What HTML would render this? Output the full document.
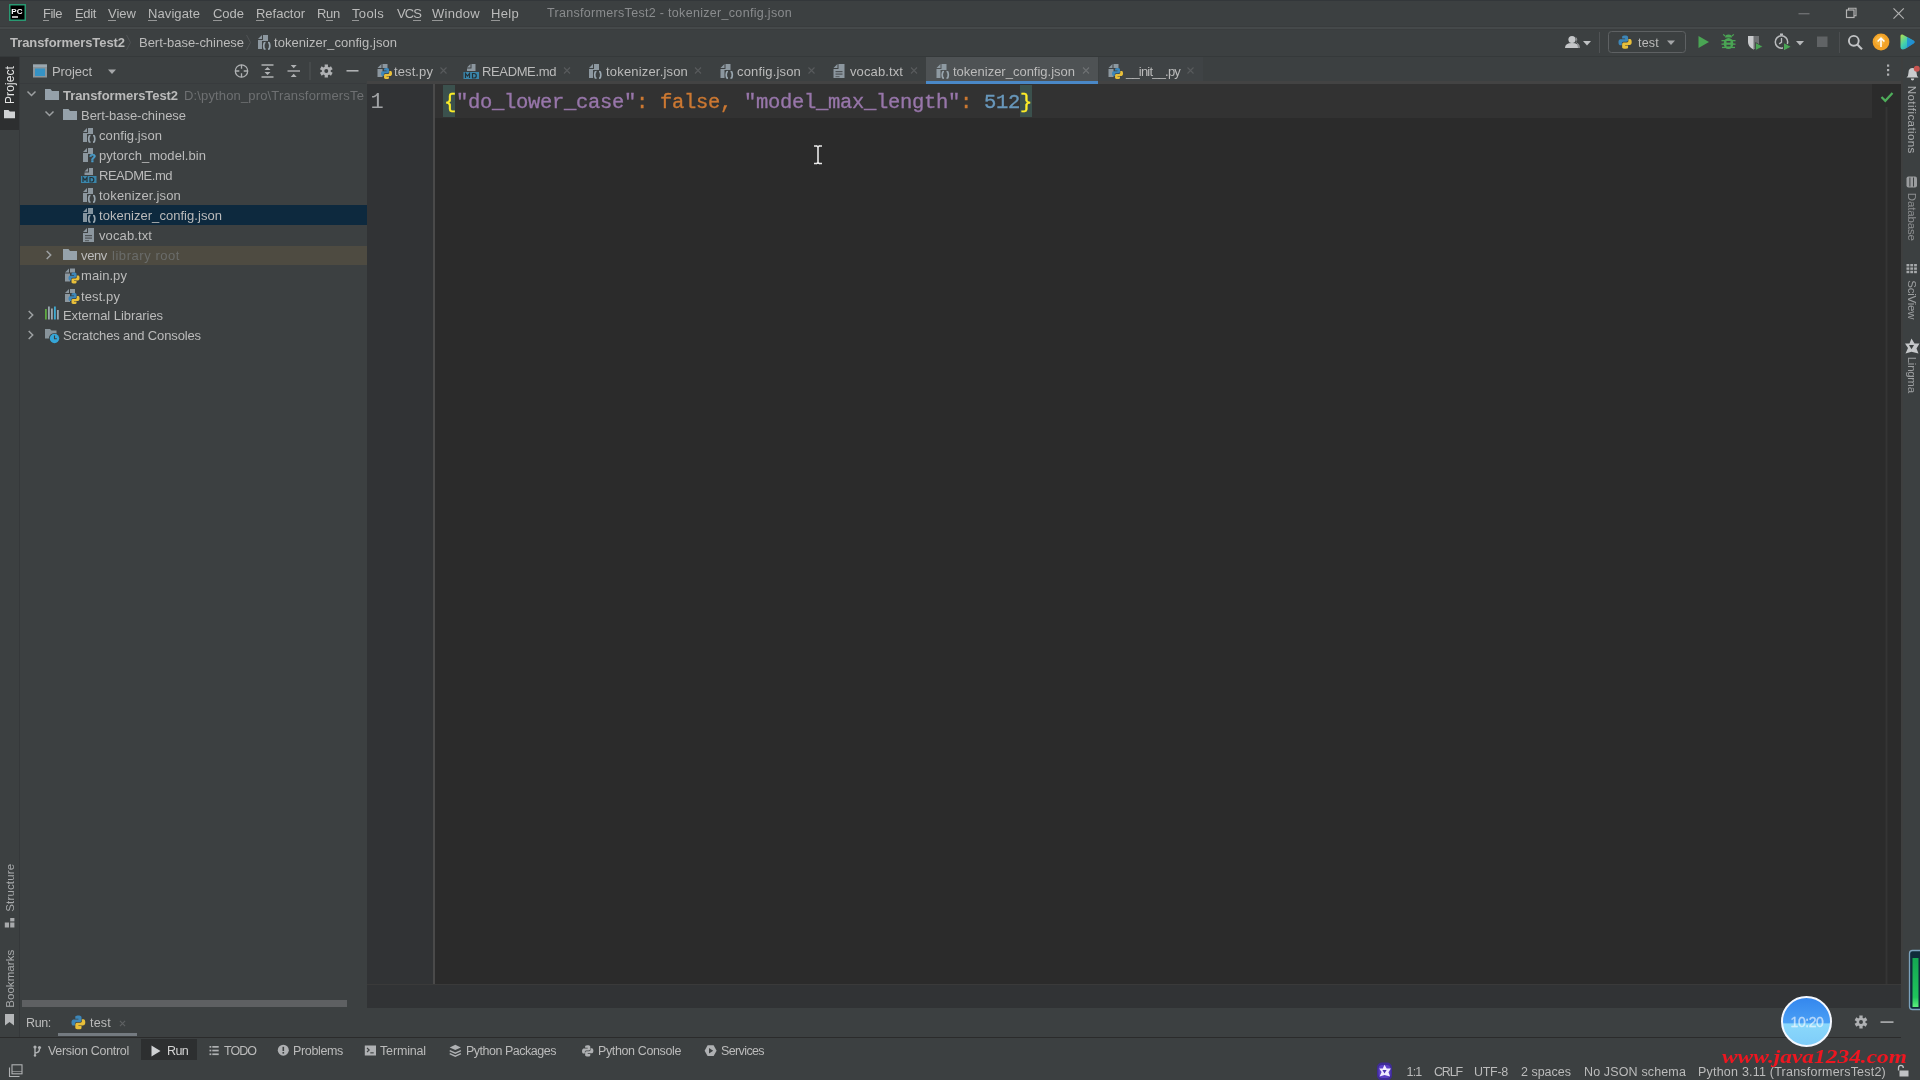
<!DOCTYPE html>
<html><head><meta charset="utf-8"><title>TransformersTest2 - tokenizer_config.json</title>
<style>
html,body{margin:0;padding:0;background:#3c4041;overflow:hidden;}
body{width:1920px;height:1080px;position:relative;overflow:hidden;font-family:"Liberation Sans", sans-serif;}
.b{position:absolute;}
.t{position:absolute;white-space:pre;line-height:1;}
.m{font-family:"Liberation Mono", monospace;}
svg{position:absolute;overflow:visible;}
body{filter:blur(.6px);}
</style></head>
<body>
<div class="b" style="left:0px;top:0px;width:1920px;height:27px;background:#3c4041;"></div>
<div class="b" style="left:0px;top:0px;width:1920px;height:1px;background:#33373a;"></div>
<div class="b" style="left:0px;top:26px;width:1920px;height:1px;background:#393c3d;"></div>
<div class="b" style="left:0px;top:27px;width:1920px;height:2px;background:#45494a;"></div>
<div class="b" style="left:0px;top:29px;width:1920px;height:1px;background:#3a3d3e;"></div>
<div class="b" style="left:0px;top:30px;width:1920px;height:26px;background:#3c4041;"></div>
<div class="b" style="left:0px;top:56px;width:1920px;height:1px;background:#35393a;"></div>
<div class="b" style="left:0px;top:57px;width:20px;height:981px;background:#3c4041;"></div>
<div class="b" style="left:0px;top:57px;width:19px;height:73px;background:#2d2f30;"></div>
<div class="b" style="left:19px;top:57px;width:1px;height:981px;background:#35383a;"></div>
<div class="b" style="left:20px;top:57px;width:347px;height:951px;background:#3c4041;"></div>
<div class="b" style="left:20px;top:83px;width:347px;height:1px;background:#383b3d;"></div>
<div class="b" style="left:20px;top:205px;width:347px;height:20px;background:#0d293e;"></div>
<div class="b" style="left:20px;top:246px;width:347px;height:19px;background:#4e4b41;"></div>
<div class="b" style="left:22px;top:1000px;width:325px;height:7px;background:#5e6062;"></div>
<div class="b" style="left:366px;top:57px;width:1535px;height:27px;background:#3c4041;"></div>
<div class="b" style="left:367px;top:81px;width:1534px;height:3px;background:#434343;"></div>
<div class="b" style="left:926px;top:57px;width:172px;height:24px;background:#4e5254;"></div>
<div class="b" style="left:926px;top:81px;width:172px;height:3px;background:#4a88c7;"></div>
<div class="b" style="left:1099px;top:57px;width:104px;height:24px;background:#3f4345;"></div>
<div class="b" style="left:367px;top:84px;width:1534px;height:900px;background:#2b2b2b;"></div>
<div class="b" style="left:367px;top:84px;width:67px;height:900px;background:#313335;"></div>
<div class="b" style="left:433px;top:84px;width:2px;height:900px;background:#4a4a4a;"></div>
<div class="b" style="left:435px;top:84px;width:1437px;height:34px;background:#323232;"></div>
<div class="b" style="left:443px;top:85px;width:12px;height:32px;background:#3b514d;"></div>
<div class="b" style="left:1020px;top:85px;width:12px;height:32px;background:#3b514d;"></div>
<div class="b" style="left:1885px;top:107px;width:3px;height:877px;background:#2f2f2f;"></div>
<div class="b" style="left:1886px;top:107px;width:1px;height:877px;background:#353535;"></div>
<div class="b" style="left:367px;top:984px;width:1534px;height:1px;background:#3a3a3a;"></div>
<div class="b" style="left:367px;top:985px;width:1534px;height:23px;background:#313335;"></div>
<div class="b" style="left:1901px;top:57px;width:19px;height:951px;background:#3c4041;"></div>
<div class="b" style="left:1901px;top:57px;width:2px;height:951px;background:#3e3f3f;"></div>
<div class="b" style="left:20px;top:1008px;width:1881px;height:29px;background:#3c4041;"></div>
<div class="b" style="left:58px;top:1033px;width:79px;height:3px;background:#747a80;"></div>
<div class="b" style="left:0px;top:1037px;width:1901px;height:1px;background:#2b2b2b;"></div>
<div class="b" style="left:0px;top:1038px;width:1920px;height:24px;background:#3c4041;"></div>
<div class="b" style="left:141px;top:1039px;width:56px;height:21px;background:#2d2f30;"></div>
<div class="b" style="left:1781px;top:996px;width:51px;height:51px;background:linear-gradient(180deg,#3487ee 0%,#4a9ff5 53%,#8ad8fb 55%,#7fcdf9 100%);border-radius:50%;box-sizing:border-box;border:2.5px solid #f4f8ff;"></div>
<div class="b" style="left:0px;top:1062px;width:1920px;height:18px;background:#3c4041;"></div>
<span class="t" style="left:43px;top:7.0px;font-size:13px;color:#bbbbbb;letter-spacing:-0.488px;">File</span>
<span class="t" style="left:75px;top:7.0px;font-size:13px;color:#bbbbbb;letter-spacing:-0.352px;">Edit</span>
<span class="t" style="left:108px;top:7.0px;font-size:13px;color:#bbbbbb;letter-spacing:0.012px;">View</span>
<span class="t" style="left:148px;top:7.0px;font-size:13px;color:#bbbbbb;letter-spacing:0.086px;">Navigate</span>
<span class="t" style="left:213px;top:7.0px;font-size:13px;color:#bbbbbb;letter-spacing:-0.020px;">Code</span>
<span class="t" style="left:256px;top:7.0px;font-size:13px;color:#bbbbbb;letter-spacing:-0.018px;">Refactor</span>
<span class="t" style="left:317px;top:7.0px;font-size:13px;color:#bbbbbb;letter-spacing:-0.286px;">Run</span>
<span class="t" style="left:352px;top:7.0px;font-size:13px;color:#bbbbbb;letter-spacing:0.328px;">Tools</span>
<span class="t" style="left:397px;top:7.0px;font-size:13px;color:#bbbbbb;letter-spacing:-0.911px;">VCS</span>
<span class="t" style="left:432px;top:7.0px;font-size:13px;color:#bbbbbb;letter-spacing:0.292px;">Window</span>
<span class="t" style="left:491px;top:7.0px;font-size:13px;color:#bbbbbb;letter-spacing:0.312px;">Help</span>
<span class="t" style="left:547px;top:6.8px;font-size:12.5px;color:#8a8c8e;letter-spacing:0.310px;">TransformersTest2 - tokenizer_config.json</span>
<span class="t" style="left:10px;top:35.5px;font-size:13px;color:#bbbbbb;font-weight:700;letter-spacing:-0.064px;">TransformersTest2</span>
<span class="t" style="left:139px;top:35.5px;font-size:13px;color:#bbbbbb;letter-spacing:-0.029px;">Bert-base-chinese</span>
<span class="t" style="left:274px;top:35.5px;font-size:13px;color:#bbbbbb;letter-spacing:0.041px;">tokenizer_config.json</span>
<span class="t" style="left:52px;top:64.5px;font-size:13px;color:#bbbbbb;letter-spacing:-0.067px;">Project</span>
<span class="t" style="left:63px;top:88.5px;font-size:13px;color:#bbbbbb;font-weight:700;letter-spacing:-0.064px;">TransformersTest2</span>
<span class="t" style="left:184px;top:88.5px;font-size:13px;color:#6e7072;letter-spacing:0.150px;">D:\python_pro\TransformersTe</span>
<span class="t" style="left:81px;top:108.5px;font-size:13px;color:#bbbbbb;letter-spacing:-0.029px;">Bert-base-chinese</span>
<span class="t" style="left:99px;top:128.5px;font-size:13px;color:#bbbbbb;letter-spacing:0.077px;">config.json</span>
<span class="t" style="left:99px;top:148.5px;font-size:13px;color:#bbbbbb;letter-spacing:0.045px;">pytorch_model.bin</span>
<span class="t" style="left:99px;top:168.5px;font-size:13px;color:#bbbbbb;letter-spacing:-0.477px;">README.md</span>
<span class="t" style="left:99px;top:188.5px;font-size:13px;color:#bbbbbb;letter-spacing:0.179px;">tokenizer.json</span>
<span class="t" style="left:99px;top:208.5px;font-size:13px;color:#bbbbbb;letter-spacing:0.041px;">tokenizer_config.json</span>
<span class="t" style="left:99px;top:228.5px;font-size:13px;color:#bbbbbb;letter-spacing:0.108px;">vocab.txt</span>
<span class="t" style="left:81px;top:248.5px;font-size:13px;color:#bbbbbb;letter-spacing:-0.367px;">venv</span>
<span class="t" style="left:112px;top:248.5px;font-size:13px;color:#6a6c6a;letter-spacing:0.548px;">library root</span>
<span class="t" style="left:81px;top:268.5px;font-size:13px;color:#bbbbbb;letter-spacing:0.067px;">main.py</span>
<span class="t" style="left:81px;top:289.5px;font-size:13px;color:#bbbbbb;letter-spacing:0.100px;">test.py</span>
<span class="t" style="left:63px;top:308.5px;font-size:13px;color:#bbbbbb;letter-spacing:-0.064px;">External Libraries</span>
<span class="t" style="left:63px;top:328.5px;font-size:13px;color:#bbbbbb;letter-spacing:-0.133px;">Scratches and Consoles</span>
<span class="t" style="left:394px;top:64.5px;font-size:13px;color:#bbbbbb;letter-spacing:0.100px;">test.py</span>
<span class="t" style="left:482px;top:64.5px;font-size:13px;color:#bbbbbb;letter-spacing:-0.366px;">README.md</span>
<span class="t" style="left:606px;top:64.5px;font-size:13px;color:#bbbbbb;letter-spacing:0.179px;">tokenizer.json</span>
<span class="t" style="left:737px;top:64.5px;font-size:13px;color:#bbbbbb;letter-spacing:0.168px;">config.json</span>
<span class="t" style="left:850px;top:64.5px;font-size:13px;color:#bbbbbb;letter-spacing:0.108px;">vocab.txt</span>
<span class="t" style="left:953px;top:64.5px;font-size:13px;color:#bbbbbb;letter-spacing:-0.007px;">tokenizer_config.json</span>
<span class="t" style="left:1126px;top:64.5px;font-size:13px;color:#bbbbbb;letter-spacing:-0.808px;">__init__.py</span>
<span class="t m" style="left:370.5px;top:91.8px;font-size:22px;color:#a1a3a5;">1</span>
<span class="t m" style="left:444px;top:93.0px;font-size:20.5px;color:#ffef28;-webkit-text-stroke:.35px;letter-spacing:-.302px;">{</span>
<span class="t m" style="left:456px;top:93.0px;font-size:20.5px;color:#9876aa;-webkit-text-stroke:.35px;letter-spacing:-.302px;">"</span>
<span class="t m" style="left:468px;top:93.0px;font-size:20.5px;color:#9876aa;-webkit-text-stroke:.35px;letter-spacing:-.302px;">do_lower_case</span>
<span class="t m" style="left:624px;top:93.0px;font-size:20.5px;color:#9876aa;-webkit-text-stroke:.35px;letter-spacing:-.302px;">"</span>
<span class="t m" style="left:636px;top:93.0px;font-size:20.5px;color:#cc7832;-webkit-text-stroke:.35px;letter-spacing:-.302px;">:</span>
<span class="t m" style="left:660px;top:93.0px;font-size:20.5px;color:#cc7832;-webkit-text-stroke:.35px;letter-spacing:-.302px;">false,</span>
<span class="t m" style="left:744px;top:93.0px;font-size:20.5px;color:#9876aa;-webkit-text-stroke:.35px;letter-spacing:-.302px;">"</span>
<span class="t m" style="left:756px;top:93.0px;font-size:20.5px;color:#9876aa;-webkit-text-stroke:.35px;letter-spacing:-.302px;">model_max_length</span>
<span class="t m" style="left:948px;top:93.0px;font-size:20.5px;color:#9876aa;-webkit-text-stroke:.35px;letter-spacing:-.302px;">"</span>
<span class="t m" style="left:960px;top:93.0px;font-size:20.5px;color:#cc7832;-webkit-text-stroke:.35px;letter-spacing:-.302px;">:</span>
<span class="t m" style="left:984px;top:93.0px;font-size:20.5px;color:#6897bb;-webkit-text-stroke:.35px;letter-spacing:-.302px;">512</span>
<span class="t m" style="left:1020px;top:93.0px;font-size:20.5px;color:#ffef28;-webkit-text-stroke:.35px;letter-spacing:-.302px;">}</span>
<span class="t" style="left:26px;top:1016.8px;font-size:12.5px;color:#bbbbbb;letter-spacing:-0.352px;">Run:</span>
<span class="t" style="left:90px;top:1016.8px;font-size:12.5px;color:#bbbbbb;letter-spacing:0.211px;">test</span>
<span class="t" style="left:48px;top:1044.8px;font-size:12.5px;color:#bbbbbb;letter-spacing:-0.298px;">Version Control</span>
<span class="t" style="left:167px;top:1044.8px;font-size:12.5px;color:#d4d4d4;letter-spacing:-0.646px;">Run</span>
<span class="t" style="left:224px;top:1044.8px;font-size:12.5px;color:#bbbbbb;letter-spacing:-0.973px;">TODO</span>
<span class="t" style="left:293px;top:1044.8px;font-size:12.5px;color:#bbbbbb;letter-spacing:-0.350px;">Problems</span>
<span class="t" style="left:380px;top:1044.8px;font-size:12.5px;color:#bbbbbb;letter-spacing:-0.156px;">Terminal</span>
<span class="t" style="left:466px;top:1044.8px;font-size:12.5px;color:#bbbbbb;letter-spacing:-0.486px;">Python Packages</span>
<span class="t" style="left:598px;top:1044.8px;font-size:12.5px;color:#bbbbbb;letter-spacing:-0.376px;">Python Console</span>
<span class="t" style="left:721px;top:1044.8px;font-size:12.5px;color:#bbbbbb;letter-spacing:-0.617px;">Services</span>
<span class="t" style="left:1406.5px;top:1065.5px;font-size:12.5px;color:#bbbbbb;letter-spacing:-0.797px;">1:1</span>
<span class="t" style="left:1434px;top:1065.5px;font-size:12.5px;color:#bbbbbb;letter-spacing:-1.164px;">CRLF</span>
<span class="t" style="left:1474px;top:1065.5px;font-size:12.5px;color:#bbbbbb;letter-spacing:-0.284px;">UTF-8</span>
<span class="t" style="left:1521px;top:1065.5px;font-size:12.5px;color:#bbbbbb;letter-spacing:-0.004px;">2 spaces</span>
<span class="t" style="left:1584px;top:1065.5px;font-size:12.5px;color:#bbbbbb;letter-spacing:0.141px;">No JSON schema</span>
<span class="t" style="left:1698px;top:1065.5px;font-size:12.5px;color:#bbbbbb;letter-spacing:0.215px;">Python 3.11 (TransformersTest2)</span>
<span class="t" style="left:1638px;top:36.8px;font-size:12.5px;color:#bbbbbb;letter-spacing:0.211px;">test</span>
<span class="t" style="left:-9.0px;top:79.0px;width:38px;font-size:12px;color:#e4e4e4;letter-spacing:0.092px;transform:rotate(-90deg);transform-origin:50% 50%;">Project</span>
<span class="t" style="left:-13.5px;top:882.2px;width:48px;font-size:11.5px;color:#a8aaac;letter-spacing:0.148px;transform:rotate(-90deg);transform-origin:50% 50%;">Structure</span>
<span class="t" style="left:-18.5px;top:973.2px;width:58px;font-size:11.5px;color:#a8aaac;letter-spacing:0.052px;transform:rotate(-90deg);transform-origin:50% 50%;">Bookmarks</span>
<span class="t" style="left:1877.0px;top:114.2px;width:68px;font-size:11.5px;color:#aaacae;letter-spacing:0.412px;transform:rotate(90deg);transform-origin:50% 50%;">Notifications</span>
<span class="t" style="left:1887.0px;top:210.8px;width:48px;font-size:11.5px;color:#8c8e90;letter-spacing:-0.154px;transform:rotate(90deg);transform-origin:50% 50%;">Database</span>
<span class="t" style="left:1891.5px;top:293.8px;width:39px;font-size:11.5px;color:#9c9ea0;letter-spacing:-0.243px;transform:rotate(90deg);transform-origin:50% 50%;">SciView</span>
<span class="t" style="left:1893.0px;top:369.2px;width:36px;font-size:11.5px;color:#9c9ea0;letter-spacing:-0.286px;transform:rotate(90deg);transform-origin:50% 50%;">Lingma</span>
<span class="t" style="left:1790.5px;top:1015.0px;font-size:14px;color:#ffffff;letter-spacing:-0.409px;opacity:.62;-webkit-text-stroke:.3px;">10:20</span>
<span class="t" style="left:1722px;top:1046.5px;font-size:19px;color:#ee1620;font-weight:700;transform:scaleX(1.2313);transform-origin:0 50%;font-family:'Liberation Serif',serif;font-style:italic;">www.java1234.com</span>
<svg width="1920" height="1080" style="left:0;top:0"><rect x="9" y="4" width="17" height="17" rx="1" fill="#21d789"/><rect x="9" y="4" width="17" height="17" rx="1" fill="#2f6f62" opacity=".6"/><rect x="10.5" y="5.5" width="14" height="14" fill="#000"/><text x="11.3" y="13.6" font-family="Liberation Sans, sans-serif" font-weight="700" font-size="8" fill="#fff">PC</text><rect x="12" y="16.3" width="6" height="1.4" fill="#fff"/>
<rect x="43" y="20" width="6" height="1" fill="#bbbbbb" opacity=".7"/>
<rect x="75" y="20" width="7" height="1" fill="#bbbbbb" opacity=".7"/>
<rect x="108" y="20" width="8" height="1" fill="#bbbbbb" opacity=".7"/>
<rect x="148" y="20" width="9" height="1" fill="#bbbbbb" opacity=".7"/>
<rect x="213" y="20" width="9" height="1" fill="#bbbbbb" opacity=".7"/>
<rect x="256" y="20" width="8" height="1" fill="#bbbbbb" opacity=".7"/>
<rect x="326" y="20" width="7" height="1" fill="#bbbbbb" opacity=".7"/>
<rect x="352" y="20" width="7" height="1" fill="#bbbbbb" opacity=".7"/>
<rect x="413" y="20" width="8" height="1" fill="#bbbbbb" opacity=".7"/>
<rect x="432" y="20" width="11" height="1" fill="#bbbbbb" opacity=".7"/>
<rect x="491" y="20" width="9" height="1" fill="#bbbbbb" opacity=".7"/>
<rect x="1798.5" y="13" width="11" height="1.4" fill="#6c6e70"/>
<rect x="1846.5" y="10" width="7.5" height="7.5" fill="none" stroke="#b4b4b4" stroke-width="1.2"/><path d="M1848.5 10 v-1.7 h7.5 v7.5 h-2" fill="none" stroke="#b4b4b4" stroke-width="1.1"/>
<path d="M1893.5 8.3 L1903.8 18.6 M1903.8 8.3 L1893.5 18.6" stroke="#b0b0b0" stroke-width="1.2" fill="none"/>
<path d="M126.5 35 L130.5 42.5 L126.5 50" fill="none" stroke="#505355" stroke-width="1"/>
<path d="M246.5 35 L250.5 42.5 L246.5 50" fill="none" stroke="#505355" stroke-width="1"/>
<path d="M262 35 L258 39 H262 Z" fill="#9aa7b0" opacity=".85"/><path d="M263 35 H268 V41 H262 V49 H258 V40 H263 Z" fill="#9aa7b0" opacity=".85"/><path d="M265.5 42.5 q-1.6 0 -1.6 1.4 v1 q0 .9 -1 .9 q1 0 1 .9 v1 q0 1.4 1.6 1.4" fill="none" stroke="#9aa7b0" stroke-width="1.7"/><path d="M268 42.5 q1.6 0 1.6 1.4 v1 q0 .9 1 .9 q-1 0 -1 .9 v1 q0 1.4 -1.6 1.4" fill="none" stroke="#9aa7b0" stroke-width="1.7"/>
<circle cx="1572" cy="39.5" r="3.6" fill="#c4c6c8"/><path d="M1565 48 q0 -5 7 -5 q7 0 7 5 z" fill="#c4c6c8"/><path d="M1575.5 37 a3 3 0 0 1 0 5.5 q4.5 .5 4.5 5.5 h-2" fill="#8f9193"/>
<path d="M1583 41 h8 l-4.0 4.5 z" fill="#c0c2c4"/>
<rect x="1599" y="32" width="1" height="21" fill="#505355"/>
<rect x="1608.5" y="31.5" width="77" height="21" rx="3" fill="none" stroke="#5e6163" stroke-width="1"/>
<g transform="translate(1618.5 35.5) scale(1.1)"><path d="M5.9 0 C3.2 0 3.3 1.2 3.3 1.2 V2.8 H6 V3.4 H2 C2 3.4 0 3.2 0 6.1 C0 9 1.7 8.8 1.7 8.8 H3 V7.2 C3 7.2 2.9 5.6 4.6 5.6 H7.2 C7.2 5.6 8.7 5.6 8.7 4.1 V1.6 C8.7 1.6 9 0 5.9 0 Z" fill="#3d86b8"/><path d="M6.1 12 C8.8 12 8.7 10.8 8.7 10.8 V9.2 H6 V8.6 H10 C10 8.6 12 8.8 12 5.9 C12 3 10.3 3.2 10.3 3.2 H9 V4.8 C9 4.8 9.1 6.4 7.4 6.4 H4.8 C4.8 6.4 3.3 6.4 3.3 7.9 V10.4 C3.3 10.4 3 12 6.1 12 Z" fill="#e8bf3a"/></g>
<path d="M1667 40.5 h8 l-4.0 4.5 z" fill="#a4a6a8"/>
<path d="M1698.5 36 L1709 42 L1698.5 48 Z" fill="#4aa554"/>
<g fill="#4aa554"><ellipse cx="1728.5" cy="43.5" rx="4.8" ry="5.6"/><path d="M1725 37.5 a3.5 3 0 0 1 7 0 z"/><rect x="1721.5" y="40" width="14" height="1.3"/><rect x="1721.5" y="43.5" width="14" height="1.3"/><rect x="1722" y="46.8" width="13" height="1.3"/><path d="M1725 36 l-1.8 -1.6 M1732 36 l1.8 -1.6" stroke="#4aa554" stroke-width="1.2"/></g><rect x="1726.5" y="41" width="4" height="1.6" fill="#3c4041"/><rect x="1726.5" y="44.8" width="4" height="1.6" fill="#3c4041"/>
<path d="M1748 36 h11 v6 q0 5 -5.5 7.5 q-5.5 -2.5 -5.5 -7.5 z" fill="#c8cacc"/><path d="M1753.5 36 h5.5 v6 q0 5 -5.5 7.5 z" fill="#6f7274"/><path d="M1755.5 42.5 L1763 46.5 L1755.5 50.5 Z" fill="#4aa554" stroke="#3c4041" stroke-width=".8"/>
<circle cx="1781.5" cy="42" r="6.2" fill="none" stroke="#b9bbbd" stroke-width="1.5"/><path d="M1781.5 38 v4.3 l-2.4 1.6" fill="none" stroke="#b9bbbd" stroke-width="1.3"/><rect x="1780" y="33.5" width="3" height="1.8" fill="#b9bbbd"/><path d="M1783.5 42.5 L1791.5 46.8 L1783.5 51 Z" fill="#4aa554" stroke="#3c4041" stroke-width="1"/>
<path d="M1796 41 h8 l-4.0 4.5 z" fill="#b6b8ba"/>
<rect x="1817" y="36.5" width="10.5" height="10.5" fill="#606365"/>
<rect x="1839" y="32" width="1" height="21" fill="#4b4e50"/>
<circle cx="1853.8" cy="40.8" r="4.9" fill="none" stroke="#c2c4c6" stroke-width="1.9"/><path d="M1857.3 44.5 L1862 49.3" stroke="#c2c4c6" stroke-width="2.1" fill="none"/>
<circle cx="1881" cy="42" r="8.4" fill="#f2a227"/><circle cx="1880" cy="40.5" r="5" fill="#f8b640" opacity=".8"/><path d="M1881 47 v-8.5 M1877.6 41.6 L1881 38 L1884.4 41.6" stroke="#fff" stroke-width="1.5" fill="none"/>
<defs><linearGradient id="lg1" x1="0" y1="0" x2="1" y2="1"><stop offset="0" stop-color="#b6e04a"/><stop offset=".45" stop-color="#3fd0b0"/><stop offset="1" stop-color="#1d7fd6"/></linearGradient></defs><path d="M1900.5 36 q0 -2 2 -1.5 l11 6 q2.2 1.5 0 3 l-8.5 5.5 q-4.5 1.5 -4.5 -2.5 z" fill="url(#lg1)"/><path d="M1907 37 l6.5 3.5 q2.2 1.5 0 3 l-6.5 4.2 z" fill="#1c86d8" opacity=".75"/>
<rect x="33" y="64.5" width="14" height="13" fill="#8b9499"/><rect x="35" y="68.5" width="10" height="7.5" fill="#3592c4"/><rect x="33" y="64.5" width="14" height="2.5" fill="#9aa7b0"/>
<path d="M108 69.5 h8 l-4.0 4.5 z" fill="#a6a8aa"/>
<circle cx="241.5" cy="71" r="6.2" fill="none" stroke="#afb1b3" stroke-width="1.3"/><path d="M241.5 64.8 v4 M241.5 73.2 v4 M235.3 71 h4 M243.7 71 h4" stroke="#afb1b3" stroke-width="1.3"/>
<path d="M261.5 65 h12 M261.5 77 h12" stroke="#afb1b3" stroke-width="1.4"/><path d="M264.5 70 L267.5 67 L270.5 70 Z M264.5 72 L267.5 75 L270.5 72 Z" fill="#afb1b3"/>
<path d="M287.5 71 h12.5" stroke="#afb1b3" stroke-width="1.4"/><path d="M290.7 65 L293.7 68.3 L296.7 65 Z M290.7 77 L293.7 73.7 L296.7 77 Z" fill="#afb1b3"/>
<rect x="309.5" y="62" width="1" height="18" fill="#515456"/>
<path d="M324.60 64.62 L328.00 64.62 L327.88 66.80 L329.15 67.53 L330.98 66.34 L332.67 69.28 L330.73 70.27 L330.73 71.73 L332.67 72.72 L330.98 75.66 L329.15 74.47 L327.88 75.20 L328.00 77.38 L324.60 77.38 L324.72 75.20 L323.45 74.47 L321.62 75.66 L319.93 72.72 L321.87 71.73 L321.87 70.27 L319.93 69.28 L321.62 66.34 L323.45 67.53 L324.72 66.80 Z" fill="#afb1b3"/><circle cx="326.3" cy="71" r="1.98" fill="#3c4041"/>
<rect x="346.5" y="70" width="12" height="1.6" fill="#afb1b3"/>
<path d="M27.5 91.5 L31.5 95.5 L35.5 91.5" fill="none" stroke="#9da0a2" stroke-width="1.5"/>
<path d="M45 89 h5.5 l1.5 2 h7 v9 h-14 z" fill="#9aa7b0" opacity="0.95"/>
<path d="M45.5 111.5 L49.5 115.5 L53.5 111.5" fill="none" stroke="#9da0a2" stroke-width="1.5"/>
<path d="M63 109 h5.5 l1.5 2 h7 v9 h-14 z" fill="#9aa7b0" opacity="0.95"/>
<path d="M87 128 L83 132 H87 Z" fill="#9aa7b0" opacity=".85"/><path d="M88 128 H93 V134 H87 V142 H83 V133 H88 Z" fill="#9aa7b0" opacity=".85"/><path d="M90.5 135.5 q-1.6 0 -1.6 1.4 v1 q0 .9 -1 .9 q1 0 1 .9 v1 q0 1.4 1.6 1.4" fill="none" stroke="#9aa7b0" stroke-width="1.7"/><path d="M93 135.5 q1.6 0 1.6 1.4 v1 q0 .9 1 .9 q-1 0 -1 .9 v1 q0 1.4 -1.6 1.4" fill="none" stroke="#9aa7b0" stroke-width="1.7"/>
<path d="M87 148 L83 152 H87 Z" fill="#9aa7b0" opacity=".85"/><path d="M88 148 H93 V154 H88 V162 H83 V153 H88 Z" fill="#9aa7b0" opacity=".85"/><text x="89.2" y="162" font-family="Liberation Sans, sans-serif" font-weight="700" font-size="11" fill="#4a9cc9" stroke="#4a9cc9" stroke-width=".5">?</text>
<path d="M88 168 L84.5 171.5 H88 Z" fill="#9aa7b0" opacity=".85"/><path d="M89 168 H93 V175 H84.5 V172.5 H89 Z" fill="#9aa7b0" opacity=".85"/><rect x="81" y="176" width="15.5" height="7" fill="#3a86ab"/><path d="M83 182 v-4.5 l2 2.5 l2 -2.5 v4.5" fill="none" stroke="#253238" stroke-width="1.2"/><path d="M90 177.5 v4.5 h1.5 q2.3 0 2.3 -2.25 q0 -2.25 -2.3 -2.25 z" fill="none" stroke="#253238" stroke-width="1.2"/>
<path d="M87 188 L83 192 H87 Z" fill="#9aa7b0" opacity=".85"/><path d="M88 188 H93 V194 H87 V202 H83 V193 H88 Z" fill="#9aa7b0" opacity=".85"/><path d="M90.5 195.5 q-1.6 0 -1.6 1.4 v1 q0 .9 -1 .9 q1 0 1 .9 v1 q0 1.4 1.6 1.4" fill="none" stroke="#9aa7b0" stroke-width="1.7"/><path d="M93 195.5 q1.6 0 1.6 1.4 v1 q0 .9 1 .9 q-1 0 -1 .9 v1 q0 1.4 -1.6 1.4" fill="none" stroke="#9aa7b0" stroke-width="1.7"/>
<path d="M87 208 L83 212 H87 Z" fill="#9aa7b0" opacity=".85"/><path d="M88 208 H93 V214 H87 V222 H83 V213 H88 Z" fill="#9aa7b0" opacity=".85"/><path d="M90.5 215.5 q-1.6 0 -1.6 1.4 v1 q0 .9 -1 .9 q1 0 1 .9 v1 q0 1.4 1.6 1.4" fill="none" stroke="#9aa7b0" stroke-width="1.7"/><path d="M93 215.5 q1.6 0 1.6 1.4 v1 q0 .9 1 .9 q-1 0 -1 .9 v1 q0 1.4 -1.6 1.4" fill="none" stroke="#9aa7b0" stroke-width="1.7"/>
<path d="M87 228 L83 232 H87 Z" fill="#9aa7b0" opacity=".85"/><path d="M88 228 H94 V242 H83 V233 H88 Z" fill="#9aa7b0" opacity=".85"/><rect x="85" y="235" width="7" height="1.2" fill="#3c4041" opacity=".8"/><rect x="85" y="237.5" width="7" height="1.2" fill="#3c4041" opacity=".8"/><rect x="85" y="240" width="4" height="1.2" fill="#3c4041" opacity=".6"/>
<path d="M46.7 251 L50.7 255 L46.7 259" fill="none" stroke="#9da0a2" stroke-width="1.5"/>
<path d="M63 249 h5.5 l1.5 2 h7 v9 h-14 z" fill="#9aa7b0" opacity="0.95"/>
<path d="M69 268.5 L65 272.5 H69 Z" fill="#9aa7b0" opacity=".85"/><path d="M70 268.5 H75 V272.5 H70 V281.5 H65 V273.5 H70 Z" fill="#9aa7b0" opacity=".85"/><g transform="translate(68.5 272.5) scale(0.92)"><path d="M5.9 0 C3.2 0 3.3 1.2 3.3 1.2 V2.8 H6 V3.4 H2 C2 3.4 0 3.2 0 6.1 C0 9 1.7 8.8 1.7 8.8 H3 V7.2 C3 7.2 2.9 5.6 4.6 5.6 H7.2 C7.2 5.6 8.7 5.6 8.7 4.1 V1.6 C8.7 1.6 9 0 5.9 0 Z" fill="#3d86b8"/><path d="M6.1 12 C8.8 12 8.7 10.8 8.7 10.8 V9.2 H6 V8.6 H10 C10 8.6 12 8.8 12 5.9 C12 3 10.3 3.2 10.3 3.2 H9 V4.8 C9 4.8 9.1 6.4 7.4 6.4 H4.8 C4.8 6.4 3.3 6.4 3.3 7.9 V10.4 C3.3 10.4 3 12 6.1 12 Z" fill="#e8bf3a"/></g>
<path d="M69 289 L65 293 H69 Z" fill="#9aa7b0" opacity=".85"/><path d="M70 289 H75 V293 H70 V302 H65 V294 H70 Z" fill="#9aa7b0" opacity=".85"/><g transform="translate(68.5 293) scale(0.92)"><path d="M5.9 0 C3.2 0 3.3 1.2 3.3 1.2 V2.8 H6 V3.4 H2 C2 3.4 0 3.2 0 6.1 C0 9 1.7 8.8 1.7 8.8 H3 V7.2 C3 7.2 2.9 5.6 4.6 5.6 H7.2 C7.2 5.6 8.7 5.6 8.7 4.1 V1.6 C8.7 1.6 9 0 5.9 0 Z" fill="#3d86b8"/><path d="M6.1 12 C8.8 12 8.7 10.8 8.7 10.8 V9.2 H6 V8.6 H10 C10 8.6 12 8.8 12 5.9 C12 3 10.3 3.2 10.3 3.2 H9 V4.8 C9 4.8 9.1 6.4 7.4 6.4 H4.8 C4.8 6.4 3.3 6.4 3.3 7.9 V10.4 C3.3 10.4 3 12 6.1 12 Z" fill="#e8bf3a"/></g>
<path d="M28.7 311 L32.7 315 L28.7 319" fill="none" stroke="#9da0a2" stroke-width="1.5"/>
<rect x="45" y="309" width="1.8" height="10.5" fill="#62b543" opacity=".9"/><rect x="48" y="306.5" width="1.8" height="13" fill="#9aa7b0"/><rect x="51" y="308.5" width="1.8" height="11" fill="#9aa7b0"/><rect x="54" y="306.5" width="1.8" height="13" fill="#40b6e0" opacity=".9"/><rect x="57" y="310" width="1.8" height="9.5" fill="#9aa7b0"/>
<path d="M28.7 331 L32.7 335 L28.7 339" fill="none" stroke="#9da0a2" stroke-width="1.5"/>
<path d="M45 329 h5 l1.5 1.5 h5 v8 h-11.5 z" fill="#87939a"/><circle cx="54.5" cy="338.5" r="5.6" fill="#3c4041"/><circle cx="54.5" cy="338.5" r="4.7" fill="#35a6d8"/><path d="M54.5 335.5 v3.2 h2.3" stroke="#3c4041" stroke-width="1.1" fill="none"/>
<path d="M381.5 64 L377.5 68 H381.5 Z" fill="#9aa7b0" opacity=".85"/><path d="M382.5 64 H387.5 V68 H382.5 V77 H377.5 V69 H382.5 Z" fill="#9aa7b0" opacity=".85"/><g transform="translate(381.0 68) scale(0.92)"><path d="M5.9 0 C3.2 0 3.3 1.2 3.3 1.2 V2.8 H6 V3.4 H2 C2 3.4 0 3.2 0 6.1 C0 9 1.7 8.8 1.7 8.8 H3 V7.2 C3 7.2 2.9 5.6 4.6 5.6 H7.2 C7.2 5.6 8.7 5.6 8.7 4.1 V1.6 C8.7 1.6 9 0 5.9 0 Z" fill="#3d86b8"/><path d="M6.1 12 C8.8 12 8.7 10.8 8.7 10.8 V9.2 H6 V8.6 H10 C10 8.6 12 8.8 12 5.9 C12 3 10.3 3.2 10.3 3.2 H9 V4.8 C9 4.8 9.1 6.4 7.4 6.4 H4.8 C4.8 6.4 3.3 6.4 3.3 7.9 V10.4 C3.3 10.4 3 12 6.1 12 Z" fill="#e8bf3a"/></g>
<path d="M440.5 67.5 L446.5 73.5 M446.5 67.5 L440.5 73.5" stroke="#585b5d" stroke-width="1.1" fill="none"/>
<path d="M470.5 64 L467.0 67.5 H470.5 Z" fill="#9aa7b0" opacity=".85"/><path d="M471.5 64 H475.5 V71 H467.0 V68.5 H471.5 Z" fill="#9aa7b0" opacity=".85"/><rect x="463.5" y="72" width="15.5" height="7" fill="#3a86ab"/><path d="M465.5 78 v-4.5 l2 2.5 l2 -2.5 v4.5" fill="none" stroke="#253238" stroke-width="1.2"/><path d="M472.5 73.5 v4.5 h1.5 q2.3 0 2.3 -2.25 q0 -2.25 -2.3 -2.25 z" fill="none" stroke="#253238" stroke-width="1.2"/>
<path d="M564 67.5 L570 73.5 M570 67.5 L564 73.5" stroke="#585b5d" stroke-width="1.1" fill="none"/>
<path d="M593 64 L589 68 H593 Z" fill="#9aa7b0" opacity=".85"/><path d="M594 64 H599 V70 H593 V78 H589 V69 H594 Z" fill="#9aa7b0" opacity=".85"/><path d="M596.5 71.5 q-1.6 0 -1.6 1.4 v1 q0 .9 -1 .9 q1 0 1 .9 v1 q0 1.4 1.6 1.4" fill="none" stroke="#9aa7b0" stroke-width="1.7"/><path d="M599 71.5 q1.6 0 1.6 1.4 v1 q0 .9 1 .9 q-1 0 -1 .9 v1 q0 1.4 -1.6 1.4" fill="none" stroke="#9aa7b0" stroke-width="1.7"/>
<path d="M695 67.5 L701 73.5 M701 67.5 L695 73.5" stroke="#585b5d" stroke-width="1.1" fill="none"/>
<path d="M724.5 64 L720.5 68 H724.5 Z" fill="#9aa7b0" opacity=".85"/><path d="M725.5 64 H730.5 V70 H724.5 V78 H720.5 V69 H725.5 Z" fill="#9aa7b0" opacity=".85"/><path d="M728.0 71.5 q-1.6 0 -1.6 1.4 v1 q0 .9 -1 .9 q1 0 1 .9 v1 q0 1.4 1.6 1.4" fill="none" stroke="#9aa7b0" stroke-width="1.7"/><path d="M730.5 71.5 q1.6 0 1.6 1.4 v1 q0 .9 1 .9 q-1 0 -1 .9 v1 q0 1.4 -1.6 1.4" fill="none" stroke="#9aa7b0" stroke-width="1.7"/>
<path d="M808.5 67.5 L814.5 73.5 M814.5 67.5 L808.5 73.5" stroke="#585b5d" stroke-width="1.1" fill="none"/>
<path d="M837.5 64 L833.5 68 H837.5 Z" fill="#9aa7b0" opacity=".85"/><path d="M838.5 64 H844.5 V78 H833.5 V69 H838.5 Z" fill="#9aa7b0" opacity=".85"/><rect x="835.5" y="71" width="7" height="1.2" fill="#3c4041" opacity=".8"/><rect x="835.5" y="73.5" width="7" height="1.2" fill="#3c4041" opacity=".8"/><rect x="835.5" y="76" width="4" height="1.2" fill="#3c4041" opacity=".6"/>
<path d="M911 67.5 L917 73.5 M917 67.5 L911 73.5" stroke="#585b5d" stroke-width="1.1" fill="none"/>
<path d="M940.5 64 L936.5 68 H940.5 Z" fill="#9aa7b0" opacity=".85"/><path d="M941.5 64 H946.5 V70 H940.5 V78 H936.5 V69 H941.5 Z" fill="#9aa7b0" opacity=".85"/><path d="M944.0 71.5 q-1.6 0 -1.6 1.4 v1 q0 .9 -1 .9 q1 0 1 .9 v1 q0 1.4 1.6 1.4" fill="none" stroke="#9aa7b0" stroke-width="1.7"/><path d="M946.5 71.5 q1.6 0 1.6 1.4 v1 q0 .9 1 .9 q-1 0 -1 .9 v1 q0 1.4 -1.6 1.4" fill="none" stroke="#9aa7b0" stroke-width="1.7"/>
<path d="M1083 67.5 L1089 73.5 M1089 67.5 L1083 73.5" stroke="#6e7173" stroke-width="1.1" fill="none"/>
<path d="M1112.5 64 L1108.5 68 H1112.5 Z" fill="#9aa7b0" opacity=".85"/><path d="M1113.5 64 H1118.5 V68 H1113.5 V77 H1108.5 V69 H1113.5 Z" fill="#9aa7b0" opacity=".85"/><g transform="translate(1112.0 68) scale(0.92)"><path d="M5.9 0 C3.2 0 3.3 1.2 3.3 1.2 V2.8 H6 V3.4 H2 C2 3.4 0 3.2 0 6.1 C0 9 1.7 8.8 1.7 8.8 H3 V7.2 C3 7.2 2.9 5.6 4.6 5.6 H7.2 C7.2 5.6 8.7 5.6 8.7 4.1 V1.6 C8.7 1.6 9 0 5.9 0 Z" fill="#3d86b8"/><path d="M6.1 12 C8.8 12 8.7 10.8 8.7 10.8 V9.2 H6 V8.6 H10 C10 8.6 12 8.8 12 5.9 C12 3 10.3 3.2 10.3 3.2 H9 V4.8 C9 4.8 9.1 6.4 7.4 6.4 H4.8 C4.8 6.4 3.3 6.4 3.3 7.9 V10.4 C3.3 10.4 3 12 6.1 12 Z" fill="#e8bf3a"/></g>
<path d="M1187.5 67.5 L1193.5 73.5 M1193.5 67.5 L1187.5 73.5" stroke="#585b5d" stroke-width="1.1" fill="none"/>
<rect x="1887" y="64.5" width="2.2" height="2.2" fill="#afb1b3"/><rect x="1887" y="69" width="2.2" height="2.2" fill="#afb1b3"/><rect x="1887" y="73.5" width="2.2" height="2.2" fill="#afb1b3"/>
<rect x="1876" y="87" width="22" height="20" fill="#2b2b2b"/>
<path d="M1881.5 97 L1885.3 100.8 L1892.5 93" fill="none" stroke="#4fae5b" stroke-width="2.2"/>
<path d="M814 146 h3 M819 146 h3 M814 163.5 h3 M819 163.5 h3 M818 146.5 v16.5" stroke="#e8e8e8" stroke-width="1.6" fill="none"/><path d="M816.5 146 q1.5 0 1.5 1.5 q0 -1.5 1.5 -1.5 M816.5 163.5 q1.5 0 1.5 -1.5 q0 1.5 1.5 1.5" stroke="#e8e8e8" stroke-width="1.4" fill="none"/>
<path d="M4 110 h4.5 l1.3 1.6 h5.2 v6.6 h-11 z" fill="#d0d2d4"/>
<rect x="4.8" y="922.5" width="4.2" height="5" fill="#a8aaac"/><rect x="10.2" y="922.5" width="4.2" height="5" fill="#a8aaac"/><rect x="10.2" y="918" width="4.2" height="3.4" fill="#a8aaac"/>
<path d="M5 1014 h9 v11.5 l-4.5 -3.6 l-4.5 3.6 z" fill="#b4b6b8"/>
<path d="M1906.5 77.5 q2 -1.5 2 -5 q0 -4.5 4 -4.5 q4 0 4 4.5 q0 3.5 2 5 z" fill="#c9cbcd"/><path d="M1910.8 78.5 h3.4 q0 2 -1.7 2 q-1.7 0 -1.7 -2 z" fill="#c9cbcd"/><circle cx="1916.8" cy="68.8" r="3" fill="#c75450"/>
<rect x="1906.5" y="176.5" width="10.5" height="11" rx="2" fill="#9a9c9e"/><rect x="1909.4" y="177.5" width="1" height="9" fill="#3c4041"/><rect x="1913" y="177.5" width="1" height="9" fill="#3c4041"/>
<rect x="1906.5" y="264" width="2.8" height="2.4" fill="#a6a8aa"/>
<rect x="1906.5" y="267.4" width="2.8" height="2.4" fill="#a6a8aa"/>
<rect x="1906.5" y="270.8" width="2.8" height="2.4" fill="#a6a8aa"/>
<rect x="1910.3" y="264" width="2.8" height="2.4" fill="#a6a8aa"/>
<rect x="1910.3" y="267.4" width="2.8" height="2.4" fill="#a6a8aa"/>
<rect x="1910.3" y="270.8" width="2.8" height="2.4" fill="#a6a8aa"/>
<rect x="1914.1" y="264" width="2.8" height="2.4" fill="#a6a8aa"/>
<rect x="1914.1" y="267.4" width="2.8" height="2.4" fill="#a6a8aa"/>
<rect x="1914.1" y="270.8" width="2.8" height="2.4" fill="#a6a8aa"/>
<path d="M1911.5 338.5 l3 5 h5 l-3 5 l2 5 l-7 -1.8 l-6 1.8 l2.5 -5.5 l-3 -4.5 h4.5 z" fill="#c4c6c8"/><path d="M1909 345 l5 0 l-2.5 4.2 z" fill="#3c4041"/>
<g transform="translate(71.5 1015.5) scale(1.15)"><path d="M5.9 0 C3.2 0 3.3 1.2 3.3 1.2 V2.8 H6 V3.4 H2 C2 3.4 0 3.2 0 6.1 C0 9 1.7 8.8 1.7 8.8 H3 V7.2 C3 7.2 2.9 5.6 4.6 5.6 H7.2 C7.2 5.6 8.7 5.6 8.7 4.1 V1.6 C8.7 1.6 9 0 5.9 0 Z" fill="#3d86b8"/><path d="M6.1 12 C8.8 12 8.7 10.8 8.7 10.8 V9.2 H6 V8.6 H10 C10 8.6 12 8.8 12 5.9 C12 3 10.3 3.2 10.3 3.2 H9 V4.8 C9 4.8 9.1 6.4 7.4 6.4 H4.8 C4.8 6.4 3.3 6.4 3.3 7.9 V10.4 C3.3 10.4 3 12 6.1 12 Z" fill="#e8bf3a"/></g>
<path d="M119.9 1020.9 L125.1 1026.1 M125.1 1020.9 L119.9 1026.1" stroke="#5f6163" stroke-width="1.1" fill="none"/>
<path d="M1859.30 1015.62 L1862.70 1015.62 L1862.58 1017.80 L1863.85 1018.53 L1865.68 1017.34 L1867.37 1020.28 L1865.43 1021.27 L1865.43 1022.73 L1867.37 1023.72 L1865.68 1026.66 L1863.85 1025.47 L1862.58 1026.20 L1862.70 1028.38 L1859.30 1028.38 L1859.42 1026.20 L1858.15 1025.47 L1856.32 1026.66 L1854.63 1023.72 L1856.57 1022.73 L1856.57 1021.27 L1854.63 1020.28 L1856.32 1017.34 L1858.15 1018.53 L1859.42 1017.80 Z" fill="#afb1b3"/><circle cx="1861" cy="1022" r="1.98" fill="#3c4041"/>
<rect x="1880.5" y="1021.3" width="13" height="1.6" fill="#afb1b3"/>
<path d="M35 1047.5 v8 M35 1053 q4.5 0 4.5 -4.5" fill="none" stroke="#afb1b3" stroke-width="1.4"/><circle cx="35" cy="1047" r="1.6" fill="#afb1b3"/><circle cx="39.5" cy="1047.5" r="1.6" fill="#afb1b3"/><circle cx="35" cy="1055.5" r="1.2" fill="#afb1b3"/>
<path d="M151.5 1045.5 L160.5 1051 L151.5 1056.5 Z" fill="#cfd1d3"/>
<rect x="209.5" y="1046" width="1.8" height="1.7" fill="#afb1b3"/><rect x="212.3" y="1046" width="6.4" height="1.7" fill="#afb1b3"/>
<rect x="209.5" y="1049.7" width="1.8" height="1.7" fill="#afb1b3"/><rect x="212.3" y="1049.7" width="6.4" height="1.7" fill="#afb1b3"/>
<rect x="209.5" y="1053.4" width="1.8" height="1.7" fill="#afb1b3"/><rect x="212.3" y="1053.4" width="6.4" height="1.7" fill="#afb1b3"/>
<circle cx="283.3" cy="1050.2" r="5.5" fill="#afb1b3"/><rect x="282.5" y="1046.8" width="1.6" height="4.2" fill="#3c4041"/><rect x="282.5" y="1052" width="1.6" height="1.6" fill="#3c4041"/>
<rect x="364.8" y="1045.5" width="11.2" height="10" fill="#afb1b3"/><path d="M367 1048 l2.2 2 l-2.2 2" fill="none" stroke="#3c4041" stroke-width="1.1"/><rect x="370.3" y="1052.3" width="3.4" height="1.1" fill="#3c4041"/>
<path d="M455.3 1044.8 l5.6 2.6 l-5.6 2.6 l-5.6 -2.6 z" fill="#afb1b3"/><path d="M449.7 1050.6 l5.6 2.6 l5.6 -2.6 M449.7 1053.6 l5.6 2.6 l5.6 -2.6" fill="none" stroke="#afb1b3" stroke-width="1.3"/>
<g transform="translate(582 1045.2) scale(.95)"><path d="M5.9 0 C3.2 0 3.3 1.2 3.3 1.2 V2.8 H6 V3.4 H2 C2 3.4 0 3.2 0 6.1 C0 9 1.7 8.8 1.7 8.8 H3 V7.2 C3 7.2 2.9 5.6 4.6 5.6 H7.2 C7.2 5.6 8.7 5.6 8.7 4.1 V1.6 C8.7 1.6 9 0 5.9 0 Z" fill="#afb1b3"/><path d="M6.1 12 C8.8 12 8.7 10.8 8.7 10.8 V9.2 H6 V8.6 H10 C10 8.6 12 8.8 12 5.9 C12 3 10.3 3.2 10.3 3.2 H9 V4.8 C9 4.8 9.1 6.4 7.4 6.4 H4.8 C4.8 6.4 3.3 6.4 3.3 7.9 V10.4 C3.3 10.4 3 12 6.1 12 Z" fill="#afb1b3"/></g>
<path d="M707.6 1045.3 h6 l3 5.4 l-3 5.4 h-6 l-3 -5.4 z" fill="#afb1b3"/><path d="M709 1048 l4.2 2.7 l-4.2 2.7 z" fill="#3c4041"/>
<rect x="12" y="1064.8" width="10" height="9" fill="none" stroke="#afb1b3" stroke-width="1.1"/><path d="M9.5 1067.5 v9 h10" fill="none" stroke="#afb1b3" stroke-width="1.1"/><rect x="12" y="1071" width="10" height="1" fill="#afb1b3" opacity=".6"/>
<rect x="1377" y="1062.5" width="15" height="18" rx="5" fill="#3f2c96"/><rect x="1378.5" y="1065" width="12" height="13" rx="4" fill="#6144cf" opacity=".85"/><path d="M1384.5 1064.8 l2.2 3.6 h4.2 l-2.4 3.9 l1.6 4.2 l-5.6 -1.5 l-4.9 1.5 l2 -4.5 l-2.4 -3.6 h3.6 z" fill="#f1ecff"/><path d="M1382.4 1070 l4.2 0 l-2.1 3.4 z" fill="#4a32b0"/>
<rect x="1899.5" y="1070.5" width="9" height="6" fill="#c0c2c4"/><path d="M1898.5 1070.5 v-2.5 q0 -2.6 2.4 -2.6 q2.4 0 2.4 2.6" fill="none" stroke="#c0c2c4" stroke-width="1.3"/>
<rect x="1909.5" y="950.5" width="14" height="59" rx="3" fill="#0f2b3a" stroke="#7ba2bd" stroke-width="1.3"/><defs><linearGradient id="lg2" x1="0" y1="0" x2="0" y2="1"><stop offset="0" stop-color="#14a852"/><stop offset=".8" stop-color="#1fc45c"/><stop offset="1" stop-color="#5cf07e"/></linearGradient></defs><rect x="1912.5" y="958" width="6" height="49" fill="url(#lg2)"/></svg>
</body></html>
